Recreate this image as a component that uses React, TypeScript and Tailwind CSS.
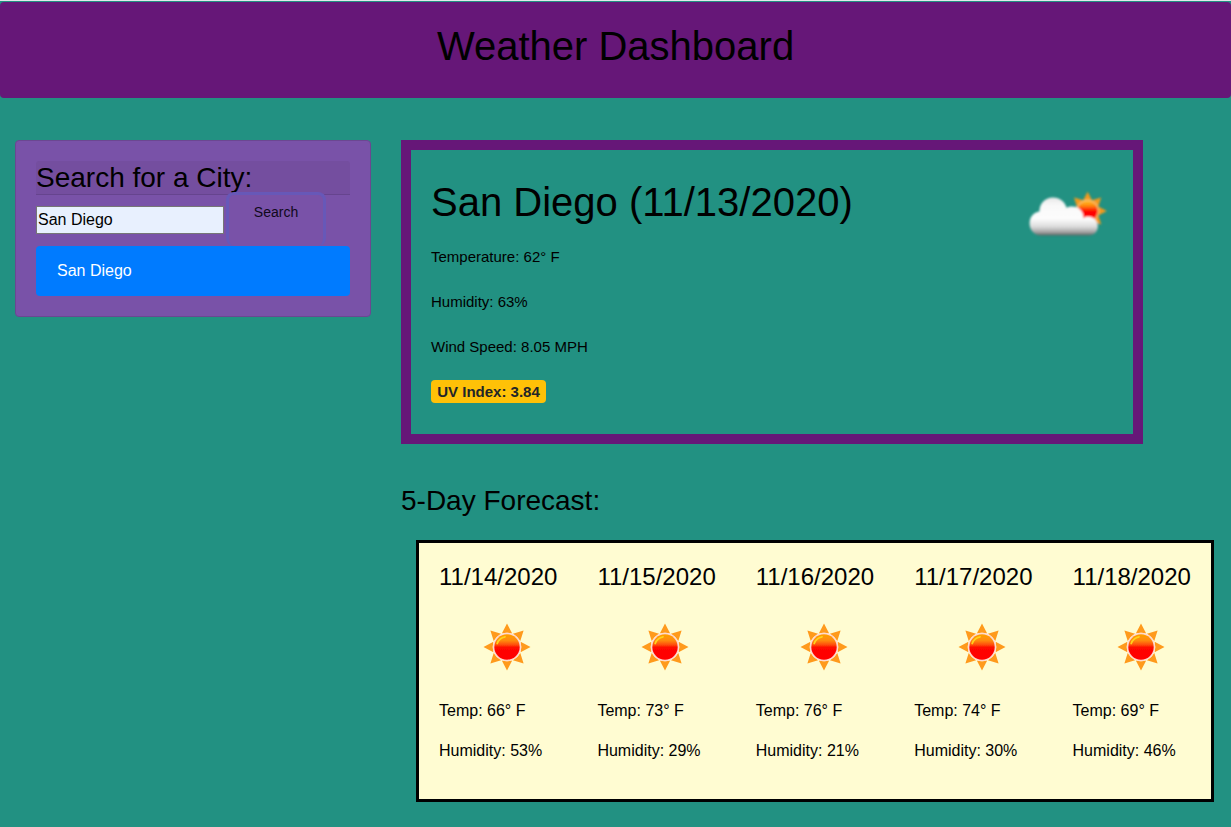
import React from "react";

const days = [
  { date: "11/14/2020", temp: 66, humidity: 53 },
  { date: "11/15/2020", temp: 73, humidity: 29 },
  { date: "11/16/2020", temp: 76, humidity: 21 },
  { date: "11/17/2020", temp: 74, humidity: 30 },
  { date: "11/18/2020", temp: 69, humidity: 46 },
];

const angles = [0, 45, 90, 135, 180, 225, 270, 315];

function SunIcon({ id }: { id: string }) {
  return (
    <svg className="h-[50px] w-[50px]" viewBox="-25 -25 50 50">
      <defs>
        <linearGradient id={id} x1="0" y1="0" x2="0" y2="1">
          <stop offset="0" stopColor="#ffa000" />
          <stop offset="0.25" stopColor="#ff8a10" />
          <stop offset="0.42" stopColor="#ff4a08" />
          <stop offset="0.52" stopColor="#ff0800" />
          <stop offset="1" stopColor="#ff0000" />
        </linearGradient>
        <filter id={`${id}-soft`} x="-10%" y="-10%" width="120%" height="120%">
          <feGaussianBlur stdDeviation="0.75" />
        </filter>
      </defs>
      <g filter={`url(#${id}-soft)`}>
        {angles.map((a) => (
          <path key={a} d="M0 -23.5 L5.2 -13.6 Q0 -15 -5.2 -13.6 Z" fill="#ff9a1c" transform={`rotate(${a})`} />
        ))}
        <circle r="14.2" fill="#ffd9cf" />
        <circle r="12.7" fill={`url(#${id})`} />
        <path d="M-9.8 -3.5 A10.5 10.5 0 0 1 -2 -10.2" fill="none" stroke="#ffd21c" strokeWidth="1.8" strokeLinecap="round" />
      </g>
    </svg>
  );
}

function CloudSunIcon() {
  return (
    <svg className="h-[60px] w-[90px]" viewBox="0 0 90 60">
      <defs>
        <linearGradient id="cloud-fill" x1="0" y1="12" x2="0" y2="51" gradientUnits="userSpaceOnUse">
          <stop offset="0" stopColor="#e6e6e6" />
          <stop offset="0.2" stopColor="#f8f8f8" />
          <stop offset="0.55" stopColor="#fdfdfd" />
          <stop offset="0.76" stopColor="#dcdcdc" />
          <stop offset="0.89" stopColor="#a8a8a8" />
          <stop offset="1" stopColor="#555b5a" />
        </linearGradient>
        <linearGradient id="cloud-sun" x1="0" y1="0" x2="0" y2="1">
          <stop offset="0" stopColor="#ffbd25" />
          <stop offset="0.24" stopColor="#ff8a10" />
          <stop offset="0.42" stopColor="#ff3005" />
          <stop offset="0.52" stopColor="#ff0000" />
          <stop offset="1" stopColor="#ff0000" />
        </linearGradient>
        <filter id="cloud-soft" x="-10%" y="-10%" width="120%" height="120%">
          <feGaussianBlur stdDeviation="0.9" />
        </filter>
      </defs>
      <g filter="url(#cloud-soft)">
        <g transform="translate(62.6 26)">
          {angles.map((a) => (
            <path key={a} d="M0 -19.2 L5 -9.8 L-5 -9.8 Z" fill="#f39a1e" transform={`rotate(${a})`} />
          ))}
          <circle r="11.4" fill="#f7bf70" />
          <circle r="10.2" fill="url(#cloud-sun)" />
        </g>
        <path
          d="M16 50.5 C9 50.5 4.6 44.5 4.6 38.5 C4.6 31.5 9 27.5 14.4 26.6 C14.4 19 19.5 12.4 28 12.4 C35 12.4 40 17 41.6 22.8 C45 21 51 21 54.5 24 C57.5 26.5 58.6 30 58.4 33.2 C60 31.8 63 31.4 65.4 31.9 C70.2 32.8 72.8 37 72.8 41.2 C72.8 46.5 69 50.5 63.5 50.5 Z"
          fill="url(#cloud-fill)"
        />
      </g>
    </svg>
  );
}

export default function App() {
  return (
    <div className="h-[827px] overflow-hidden border-t border-[#e4e7eb] bg-[#229182] pt-px font-['Liberation_Sans',Arial,sans-serif] text-base text-black">
      <header className="h-24 rounded bg-[#661778] pt-5 text-center">
        <h1 className="text-[40px] leading-[48px]">Weather Dashboard</h1>
      </header>

      <div className="flex pt-[42px]">
        <aside className="ml-[15px] h-[177px] w-[356px] shrink-0 rounded border border-[#6b4791] bg-[#7952a8] p-5">
          <h3 className="h-[34px] rounded-t-[3px] border-b border-[#66448e] bg-[#744e9f] text-[28px] leading-[33px]">
            Search for a City:
          </h3>
          <div className="flex h-[51px]">
            <input
              className="mt-[11px] h-7 w-[188px] border border-[#767676] bg-[#e8f0fe] px-px outline-none"
              defaultValue="San Diego"
              aria-label="City"
            />
            <button className="-mt-[3px] ml-[2px] flex h-[54px] w-[100px] items-start justify-center rounded-lg border-[3px] border-b-0 border-[#6758b8] pt-[7px] text-sm leading-[21px] text-[#10091b]">
              Search
            </button>
          </div>
          <div className="h-[50px] rounded bg-[#007bff] px-[21px] pt-[13px] leading-6 text-white">San Diego</div>
        </aside>

        <main className="ml-[30px] w-[830px]">
          <section className="flex h-[304px] w-[742px] justify-between border-[10px] border-[#661778] pr-[18px] pl-5">
            <div className="pt-7 text-[15px]">
              <h1 className="text-[40px] leading-[48px]">San Diego (11/13/2020)</h1>
              <p className="mt-5 leading-[22px]">Temperature: 62° F</p>
              <p className="mt-[23px] leading-[22px]">Humidity: 63%</p>
              <p className="mt-[23px] leading-[22px]">Wind Speed: 8.05 MPH</p>
              <div className="mt-[22px] h-[23px] w-[115px] rounded bg-[#ffc107] text-center font-bold leading-[23px] text-[#212529]">
                UV Index: 3.84
              </div>
            </div>
            <div className="pt-[35px]">
              <CloudSunIcon />
            </div>
          </section>

          <h3 className="mt-10 text-[28px] leading-[34px]">5-Day Forecast:</h3>

          <section className="mt-[22px] ml-[15px] flex h-[262px] w-[798px] border-[3px] border-black bg-[#fffcd2] pt-5 pl-5">
            {days.map((day, i) => (
              <article key={day.date} className="w-[158.4px] shrink-0">
                <h4 className="text-2xl leading-7">{day.date}</h4>
                <div className="ml-[43px] mt-[31px]">
                  <SunIcon id={`sun-${i}`} />
                </div>
                <p className="mt-[27px] leading-6">Temp: {day.temp}° F</p>
                <p className="mt-4 leading-6">Humidity: {day.humidity}%</p>
              </article>
            ))}
          </section>
        </main>
      </div>
    </div>
  );
}
